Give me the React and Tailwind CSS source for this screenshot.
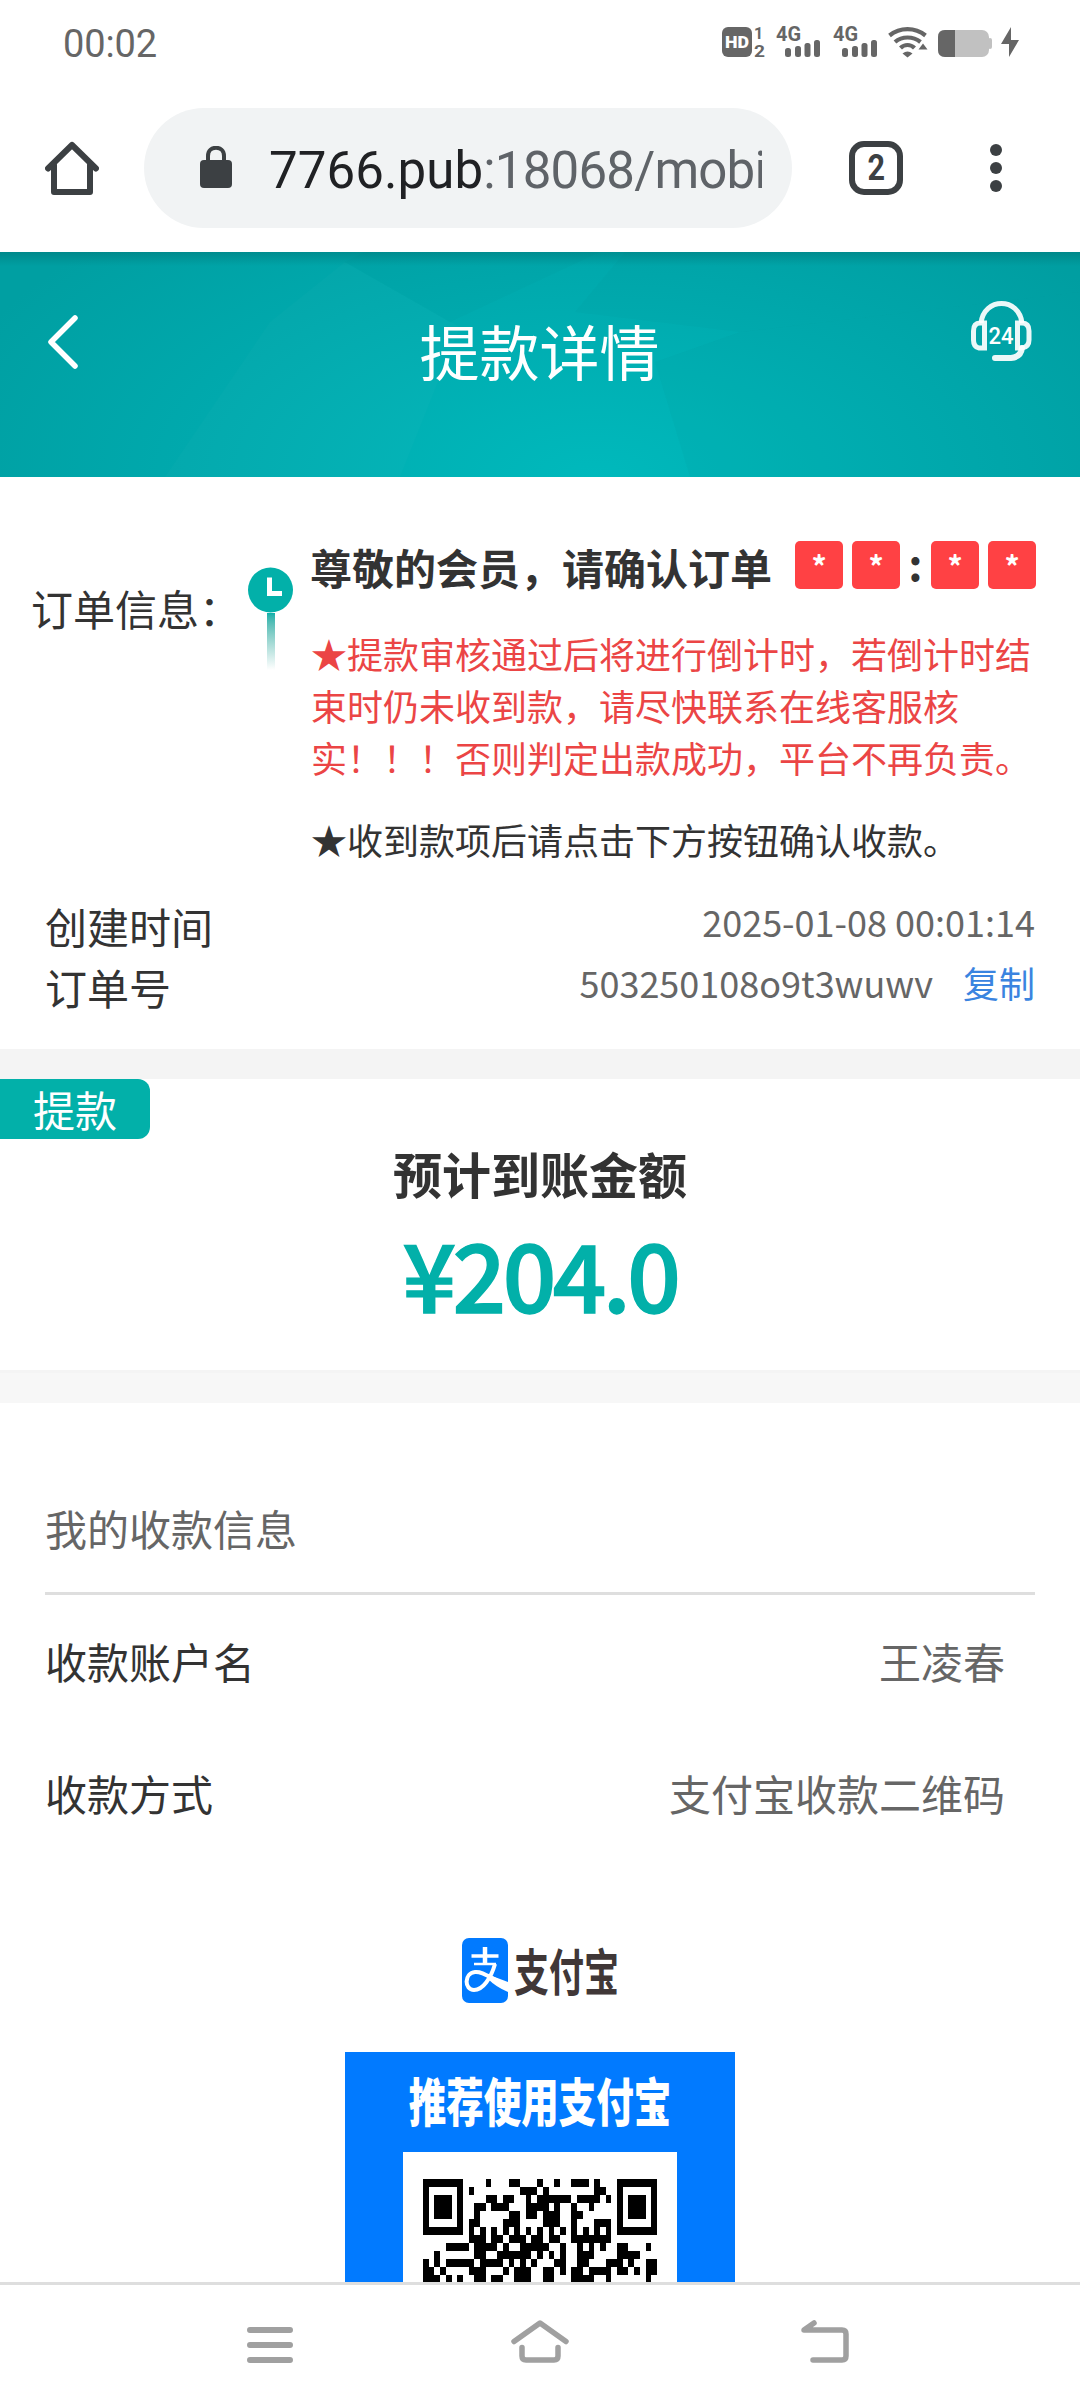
import React from "react";

// One string per module row of the payment code
const QR_ROWS = [
  "1111111....1...11...1..1..111.1...1111111",
  "1.....1.1........111.1........11..1.....1",
  "1.111.1....11.11..1.111111.1111.1.1.111.1",
  "1.111.1..11.111...1111.1..1..1....1.111.1",
  "1.111.1..1.....11.11.111..11......1.111.1",
  "1.....1.11....111....111..1...111.1.....1",
  "1111111.1.1.1.1.1.1.1.1.1.1.1.1.1.1111111",
  "........111.11.111.11.11..1111111........",
  "....1111.1111.1..11111..1..1.1.1..11...1.",
  "..1......11..111111.1.1.1..111....1111...",
  "1.1.11111.1111.1.1.1...11..11...111.1..11",
  "11.1....111...1.111..11.1.11.1111.11.1.11",
  "111.1.1..11.11..111..11...1111..1......1.",
];

function Signal() {
  return (
    <svg width="46" height="44" viewBox="0 -6 46 44" fill="#666" className="overflow-visible">
      <text x="0" y="15" fontFamily="Roboto" fontWeight="700" fontSize="20" textLength="25" lengthAdjust="spacingAndGlyphs">4G</text>
      <rect x="9" y="22" width="6" height="9" rx="2.5" />
      <rect x="19" y="20" width="6" height="11" rx="2.5" />
      <rect x="28.500" y="17" width="6" height="14" rx="2.500" />
      <rect x="38" y="14" width="6" height="17" rx="2.500" />
    </svg>
  );
}

function StatusBar() {
  return (
    <div className="flex h-[84px] items-center justify-between pr-[61px] pl-[63px] font-['Roboto',sans-serif] text-[#666]">
      <span className="pt-[5px] text-[38px] tracking-[-0.1px]">00:02</span>
      <div className="flex h-[44px] items-center">
        <svg width="46" height="44" viewBox="0 -6 46 44" className="mr-[8px] overflow-visible">
          <rect x="0" y="1" width="30" height="30" rx="6" fill="#666" />
          <text x="3" y="22" fill="#fff" fontFamily="Roboto" fontWeight="900" fontSize="17" textLength="24" lengthAdjust="spacingAndGlyphs">HD</text>
          <text x="32" y="13" fill="#666" fontFamily="Roboto" fontWeight="700" fontSize="16">1</text>
          <text x="32" y="31" fill="#666" fontFamily="Roboto" fontWeight="700" fontSize="16" textLength="11" lengthAdjust="spacingAndGlyphs">2</text>
        </svg>
        <div className="mr-[11px]"><Signal /></div>
        <div className="mr-[9px]"><Signal /></div>
        <svg width="41" height="32" viewBox="0 0 41 32" fill="none" stroke="#666" strokeWidth="4.200" className="mr-[9px]">
          <path d="M1.500 9.500C12 1 27 1 37.500 9.500" />
          <path d="M7 16C14 10 25 10 32.500 16" />
          <path d="M12.500 22C16.500 18 22.500 18 26.500 22" />
          <path d="M14.500 27.500Q19.500 23.500 24.500 27.500L19.500 31.500z" fill="#666" stroke="none" />
          <path d="M30.500 23.500L35 17.500L39.500 23.500z" fill="#666" stroke="none" />
        </svg>
        <svg width="54" height="32" viewBox="0 0 54 32" className="mr-[9px]">
          <rect x="0" y="4" width="51" height="27" rx="7" fill="#c1c1c1" />
          <rect x="50" y="12" width="4" height="11" rx="2" fill="#c1c1c1" />
          <path d="M17 4H7Q0 4 0 11V24Q0 31 7 31H17z" fill="#666" />
        </svg>
        <svg width="18" height="32" viewBox="0 0 18 32" fill="#666">
          <path d="M10 1L0 18H8L8 31L18 14H10z" />
        </svg>
      </div>
    </div>
  );
}

function BrowserBar() {
  return (
    <div className="flex h-[168px] items-center pl-[45px]">
      <svg width="54" height="54" viewBox="0 0 54 54" fill="none" stroke="#3c4043" strokeWidth="6" strokeLinecap="round" strokeLinejoin="round">
        <path d="M3 27.500L27 4L51 27.500" />
        <path d="M9 24V51H45V24" />
      </svg>
      <div className="ml-[45px] flex h-[120px] w-[648px] items-center rounded-full bg-[#f1f3f4] pl-[56px]">
        <svg width="32" height="42" viewBox="0 0 32 42" className="-mt-[2px] shrink-0">
          <rect x="0" y="14" width="32" height="28" rx="4" fill="#3c4043" />
          <path d="M8 16V10C8 -1 24 -1 24 10V16" fill="none" stroke="#3c4043" strokeWidth="4" />
        </svg>
        <div className="ml-[37px] w-[493px] overflow-hidden pt-[6px] font-['Roboto',sans-serif] text-[51px] leading-[64px] tracking-[-0.8px] whitespace-nowrap text-[#5f6368]">
          <span className="tracking-[0.1px] text-[#202124]">7766.pub</span>:18068/mobi
        </div>
      </div>
      <div className="ml-[57px] flex size-[54px] items-center justify-center rounded-[15px] border-[6px] border-[#3c4043] font-['Roboto',sans-serif] text-[36px] leading-none font-bold text-[#3c4043]">
        <span className="scale-x-[0.85]">2</span>
      </div>
      <div className="ml-[87px] flex flex-col gap-[6px]">
        <i className="size-[12px] rounded-full bg-[#3c4043]" />
        <i className="size-[12px] rounded-full bg-[#3c4043]" />
        <i className="size-[12px] rounded-full bg-[#3c4043]" />
      </div>
    </div>
  );
}

function PageHeader() {
  return (
    <div className="relative flex h-[225px] items-start justify-between bg-[radial-gradient(ellipse_680px_340px_at_55%_100%,#00b9bc,#00a9ad_60%,#009fa2)] px-[48px] text-white">
      <svg className="absolute inset-0" width="1080" height="225" viewBox="0 0 1080 225">
        <defs>
          <linearGradient id="shade" x1="0" y1="0" x2="0" y2="1">
            <stop offset="0" stopColor="#055" stopOpacity="0.3" />
            <stop offset="1" stopColor="#055" stopOpacity="0" />
          </linearGradient>
        </defs>
        <path d="M345 10L460 75L400 225H165L270 70z" fill="#fff" fillOpacity="0.015" />
        <path d="M345 10L450 70L600 0H365z" fill="#005a60" fillOpacity="0.030" />
        <path d="M575 60L625 0H1080V40L740 80z" fill="#005a60" fillOpacity="0.03" />
        <path d="M655 110L740 80L1080 40V225H690z" fill="#005a60" fillOpacity="0.04" />
        <rect width="1080" height="14" fill="url(#shade)" />
      </svg>
      <svg width="60" height="54" viewBox="0 0 60 54" fill="none" stroke="#fff" strokeWidth="5.500" strokeLinecap="round" strokeLinejoin="round" className="relative mt-[63px]">
        <path d="M27 3L3 27L27 51" />
      </svg>
      <h1 className="relative mt-[53px] text-[60px] leading-[90px]">提款详情</h1>
      <svg width="62" height="64" viewBox="0 0 62 64" fill="none" stroke="#fff" strokeOpacity="0.92" strokeWidth="5" className="relative mt-[49px] -mr-[1px] overflow-visible">
        <path d="M10 22C13 -4 48 -4 51 22" />
        <path d="M13.500 22V47H8Q2.500 46 2.500 39V30Q2.500 22 9 22z" />
        <path d="M46.500 22V47H51Q58 46 58 39V30Q58 22 51 22z" />
        <path d="M51 47Q50 56 40 57H24" strokeLinecap="round" strokeWidth="6" />
        <text x="17.500" y="43" fill="#fff" stroke="none" fontFamily="Roboto" fontWeight="500" fontSize="24" textLength="25" lengthAdjust="spacingAndGlyphs">24</text>
      </svg>
    </div>
  );
}

function TimeBox() {
  return (
    <span className="flex h-[48px] w-[48px] justify-center rounded-[5px] bg-[#ff4144] text-[30px] leading-[48px] font-bold text-white">
      *
    </span>
  );
}

function OrderInfo() {
  return (
    <section className="h-[572px] pr-[45px] text-[#333]">
      <div className="flex pt-[64px] pl-[31px]">
        <span className="mt-[37px] w-[217px] shrink-0 text-[42px] leading-[60px] whitespace-nowrap">订单信息：</span>
        <div className="mt-[26px] flex w-[45px] shrink-0 flex-col items-center">
          <svg width="45" height="46" viewBox="0 0 45 45">
            <circle cx="22.500" cy="22.500" r="22.500" fill="#02b0a9" />
            <path d="M21.500 10V26H34" fill="none" stroke="#fff" strokeWidth="5" />
          </svg>
          <i className="h-[57px] w-[8px] bg-linear-to-b from-[#02b0a9] to-white" />
        </div>
        <div className="ml-[17px] w-[726px] shrink-0">
          <div className="flex h-[48px] items-center">
            <b className="w-[485px] pt-[3px] text-[42px] leading-[60px] whitespace-nowrap">尊敬的会员，请确认订单</b>
            <div className="flex gap-[9px]"><TimeBox /><TimeBox /></div>
            <b className="w-[31px] pb-[6px] text-center text-[44px] leading-none">:</b>
            <div className="flex gap-[9px]"><TimeBox /><TimeBox /></div>
          </div>
          <p className="mt-[38px] ml-px text-[36px] leading-[52px] whitespace-nowrap text-[#eb4545]">
            ★提款审核通过后将进行倒计时，若倒计时结<br />
            束时仍未收到款，请尽快联系在线客服核<br />
            实！！！否则判定出款成功，平台不再负责。
          </p>
          <p className="mt-[30px] ml-px text-[36px] leading-[52px] whitespace-nowrap">★收到款项后请点击下方按钮确认收款。</p>
        </div>
      </div>
      <div className="mt-[30px] flex h-[61px] items-center justify-between pl-[45px] text-[42px]">
        <span>创建时间</span>
        <span className="pb-[9px] text-[36px] text-[#666]">2025-01-08 00:01:14</span>
      </div>
      <div className="flex h-[61px] items-center justify-between pl-[45px] text-[42px]">
        <span>订单号</span>
        <span className="pb-[9px] text-[36px] text-[#666]">
          503250108o9t3wuwv<span className="ml-[30px] text-[#3a84e0]">复制</span>
        </span>
      </div>
    </section>
  );
}

function Amount() {
  return (
    <section className="h-[291px] text-center">
      <div className="flex h-[60px] w-[150px] items-center justify-center rounded-r-[12px] bg-[#02b0a9] pb-[2px] text-[42px] text-white">提款</div>
      <h2 className="mt-px text-[49px] leading-[66px] font-bold text-[#333]">预计到账金额</h2>
      <p className="mt-[8px] text-[94px] leading-[116px] font-medium tracking-[-3.500px] text-[#02b0a9] [-webkit-text-stroke:1.5px_#02b0a9]">¥204.0</p>
    </section>
  );
}

function InfoRow({ label, value }) {
  return (
    <div className="flex h-[132px] items-center justify-between pr-[30px] pb-[2px] text-[42px]">
      <span className="text-[#333]">{label}</span>
      <span className="text-[#666]">{value}</span>
    </div>
  );
}

function QrCode() {
  return (
    <svg width="234" height="104" viewBox="0 0 41 13" preserveAspectRatio="none" shapeRendering="crispEdges">
      {QR_ROWS.map((row, y) =>
        [...row].map((c, x) => c === "1" && <rect key={`${x}-${y}`} x={x} y={y} width="1" height="1" />)
      )}
    </svg>
  );
}

function PayCode() {
  return (
    <div className="flex flex-col items-center pt-[79px]">
      <div className="flex h-[65px] items-center">
        <svg width="46" height="65" viewBox="0 0 46 65">
          <rect width="46" height="65" rx="7" fill="#017aff" />
          <g fill="none" stroke="#fff">
            <path d="M9.500 18H36.500" strokeWidth="3.500" />
            <path d="M23 9V26" strokeWidth="4.500" />
            <path d="M12 26H34" strokeWidth="2.500" />
            <path d="M33 26C29 40 21 52 12 52C2 52 2 35 13 34C22 33 30 42 46 47.500" strokeWidth="4" />
          </g>
          <path d="M30 38L46 44V54Q34 49 26 41z" fill="#fff" />
        </svg>
        <span className="mb-[5px] ml-[6px] w-[104px] scale-y-[1.42] text-[35px] leading-none font-bold whitespace-nowrap text-[#403737]">支付宝</span>
      </div>
      <div className="mt-[49px] flex h-[231px] w-[390px] flex-col items-center overflow-hidden bg-[#017aff]">
        <span className="mt-[26px] h-[44px] scale-y-[1.38] text-[37.500px] leading-[44px] font-black whitespace-nowrap text-white">推荐使用支付宝</span>
        <div className="mt-[30px] flex h-[131px] w-[274px] justify-center bg-white pt-[27px]">
          <QrCode />
        </div>
      </div>
    </div>
  );
}

function BottomNav() {
  return (
    <nav className="flex h-[126px] items-start border-t-[3px] border-[#dedede] bg-white pt-[34px] pl-[247px]">
      <svg width="46" height="46" viewBox="0 0 46 46" stroke="#a0a0a0" strokeWidth="6" strokeLinecap="round">
        <path d="M3 11H43M3 26H43M3 41H43" />
      </svg>
      <svg width="58" height="46" viewBox="0 0 58 46" fill="none" stroke="#a0a0a0" strokeWidth="5.500" strokeLinecap="round" strokeLinejoin="round" className="ml-[218px]">
        <path d="M3 22.500L29 4L55 22.500" />
        <path d="M11 28.500V37Q11 41 15 41H43Q47 41 47 37V28.500" />
      </svg>
      <svg width="48" height="46" viewBox="0 0 48 46" fill="none" stroke="#a0a0a0" strokeWidth="5.500" strokeLinecap="round" strokeLinejoin="round" className="ml-[232px]">
        <path d="M12 41H41Q45 41 45 37V15Q45 11 41 11H3L13 4" />
      </svg>
    </nav>
  );
}

function App() {
  return (
    <div className="h-[2408px] w-[1080px] overflow-hidden bg-white font-['Noto_Sans_CJK_SC',sans-serif]">
      <StatusBar />
      <BrowserBar />
      <PageHeader />
      <OrderInfo />
      <div className="h-[30px] bg-[#f4f4f4]" />
      <Amount />
      <div className="h-[33px] border-t-[3px] border-[#f4f4f4] bg-[#f7f7f7]" />
      <section className="h-[879px] overflow-hidden px-[45px]">
        <div className="h-[192px] border-b-[3px] border-[#dedede] pt-[94px] text-[42px] leading-[62px] text-[#666]">我的收款信息</div>
        <InfoRow label="收款账户名" value="王凌春" />
        <InfoRow label="收款方式" value="支付宝收款二维码" />
        <PayCode />
      </section>
      <BottomNav />
    </div>
  );
}

export default App;
